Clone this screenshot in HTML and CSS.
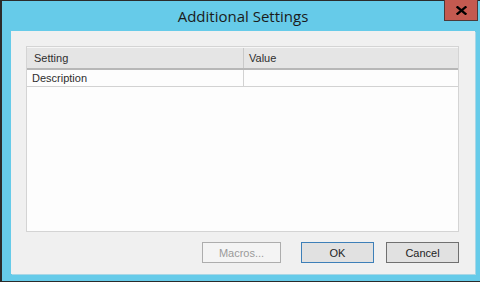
FILE: index.html
```html
<!DOCTYPE html>
<html>
<head>
<meta charset="utf-8">
<link rel="stylesheet" href="styles.css">
</head>
<body>
<div class="window">
  <div class="titlebar">
    <div class="title">Additional Settings</div>
    <div class="close"><svg width="11" height="9" viewBox="0 0 11 9"><path d="M1.5 1.2 L9.5 7.8 M9.5 1.2 L1.5 7.8" stroke="#000" stroke-width="2.3" stroke-linecap="square"/></svg></div>
  </div>
  <div class="client">
    <div class="grid">
      <div class="head">
        <div class="cell c1">Setting</div>
        <div class="cell c2">Value</div>
      </div>
      <div class="row">
        <div class="cell c1">Description</div>
        <div class="cell c2"></div>
      </div>
    </div>
    <div class="buttons">
      <button class="btn disabled">Macros...</button>
      <button class="btn default">OK</button>
      <button class="btn">Cancel</button>
    </div>
  </div>
</div>
</body>
</html>
```
FILE: styles.css
```css
html, body {
  margin: 0;
  padding: 0;
  width: 480px;
  height: 282px;
  overflow: hidden;
  background: #66cbe9;
}
.window {
  box-sizing: border-box;
  width: 480px;
  height: 282px;
  border-left: 2px solid #2b2b2b;
  border-top: 1px solid #2b2b2b;
  border-bottom: 1px solid #2b2b2b;
  background: #66cbe9;
  display: flex;
  flex-direction: column;
  padding: 0 5px 7px 9px;
  font-family: "Open Sans", "Noto Sans", sans-serif;
}
.titlebar {
  height: 30px;
  position: relative;
  display: flex;
  align-items: center;
  justify-content: center;
}
.title {
  font-size: 15px;
  color: #1b1b1b;
  margin-top: -1px;
}
.close {
  position: absolute;
  right: -3px;
  top: -1px;
  width: 32px;
  height: 20px;
  background: #c45a50;
  border: 1px solid #4c3a3a;
  border-top: none;
  display: flex;
  align-items: center;
  justify-content: center;
}
.client {
  flex: 1;
  background: #f0f0f0;
  box-shadow: 1px 1px 0 #a9d7e6;
  display: flex;
  flex-direction: column;
  padding: 15px 16px 11px 15px;
}
.grid {
  flex: 1;
  background: #fdfdfd;
  border: 1px solid #d4d4d4;
  font-family: "Liberation Sans", Arial, sans-serif;
  font-size: 11px;
  color: #2e2e2e;
}
.head {
  display: flex;
  background: #e5e5e5;
  border-bottom: 2px solid #b7b7b7;
  border-top: 1px solid #f6f6f6;
  box-sizing: border-box;
  height: 23px;
}
.head .cell {
  line-height: 20px;
  padding-left: 7px;
}
.head .c1 {
  border-right: 1px solid #c9c9c9;
}
.head .c2 {
  padding-left: 5px;
}
.row {
  display: flex;
  height: 16px;
  border-bottom: 1px solid #d2d2d2;
}
.row .cell {
  line-height: 16px;
  padding-left: 5px;
}
.row .c1 {
  border-right: 1px solid #d2d2d2;
}
.c1 {
  width: 217px;
  box-sizing: border-box;
}
.c2 {
  flex: 1;
}
.buttons {
  display: flex;
  justify-content: flex-end;
  margin-top: 10px;
  gap: 12px;
}
.btn {
  height: 21px;
  width: 73px;
  box-sizing: border-box;
  border: 1px solid #707070;
  background: #e1e1e1;
  font-family: "Liberation Sans", Arial, sans-serif;
  font-size: 11px;
  color: #1e1e1e;
  padding: 0;
  margin: 0;
}
.btn.disabled {
  width: 79px;
  margin-right: 8px;
  background: #f4f4f4;
  border-color: #adadad;
  color: #9a9a9a;
}
.btn.default {
  border-color: #3d7fb8;
}
```
